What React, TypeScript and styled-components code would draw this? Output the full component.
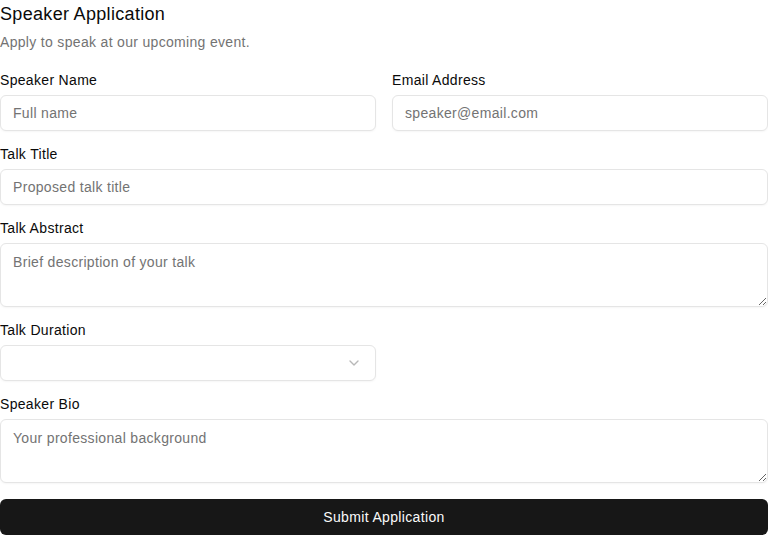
import React from 'react';
import styled, { createGlobalStyle } from 'styled-components';
import { ChevronDown } from 'lucide-react';

const GlobalStyle = createGlobalStyle`
  * { box-sizing: border-box; }
  body {
    margin: 0;
    background: #ffffff;
    font-family: 'Liberation Sans', Arial, Helvetica, sans-serif;
    letter-spacing: 0.02em;
    color: #0a0a0a;
  }
`;

const Page = styled.div`
  width: 768px;
`;

const Heading = styled.h2`
  margin: 0;
  font-size: 18px;
  font-weight: 400;
  line-height: 28px;
`;

const Lead = styled.p`
  margin: 4px 0 0;
  font-size: 14px;
  line-height: 20px;
  color: #737373;
`;

const Form = styled.form`
  display: flex;
  flex-direction: column;
  gap: 13px;
  margin-top: 18px;
`;

const Row = styled.div`
  display: grid;
  grid-template-columns: 1fr 1fr;
  gap: 16px;
`;

const Field = styled.div<{ half?: boolean }>`
  display: flex;
  flex-direction: column;
  gap: 5px;
  width: ${(p) => (p.half ? '376px' : '100%')};
`;

const Label = styled.label`
  font-size: 14px;
  line-height: 20px;
`;

const Input = styled.input`
  height: 36px;
  width: 100%;
  border: 1px solid #e5e5e5;
  border-radius: 6px;
  padding: 0 12px;
  font-family: inherit;
  letter-spacing: inherit;
  font-size: 14px;
  color: #0a0a0a;
  background: #fff;
  box-shadow: 0 1px 2px rgba(0, 0, 0, 0.04);
  outline: none;
  &::placeholder { color: #737373; }
`;

const TextArea = styled.textarea`
  height: 64px;
  width: 100%;
  border: 1px solid #e5e5e5;
  border-radius: 6px;
  padding: 8px 12px;
  font-family: inherit;
  letter-spacing: inherit;
  font-size: 14px;
  line-height: 20px;
  color: #0a0a0a;
  background: #fff;
  box-shadow: 0 1px 2px rgba(0, 0, 0, 0.04);
  outline: none;
  display: block;
  &::placeholder { color: #737373; }
`;

const SelectBox = styled.button`
  height: 36px;
  width: 100%;
  border: 1px solid #e5e5e5;
  border-radius: 6px;
  padding: 0 13px 0 12px;
  background: #fff;
  box-shadow: 0 1px 2px rgba(0, 0, 0, 0.04);
  display: flex;
  align-items: center;
  justify-content: flex-end;
  color: #737373;
  svg { opacity: 0.5; }
`;

const Submit = styled.button`
  margin-top: 3px;
  height: 36px;
  width: 100%;
  border: none;
  border-radius: 6px;
  background: #171717;
  color: #fafafa;
  font-family: inherit;
  letter-spacing: 0.025em;
  font-size: 14px;
  font-weight: 500;
`;

export default function App() {
  return (
    <Page>
      <GlobalStyle />
      <Heading>Speaker Application</Heading>
      <Lead>Apply to speak at our upcoming event.</Lead>
      <Form onSubmit={(e) => e.preventDefault()}>
        <Row>
          <Field>
            <Label>Speaker Name</Label>
            <Input placeholder="Full name" />
          </Field>
          <Field>
            <Label>Email Address</Label>
            <Input placeholder="speaker@email.com" />
          </Field>
        </Row>
        <Field>
          <Label>Talk Title</Label>
          <Input placeholder="Proposed talk title" />
        </Field>
        <Field>
          <Label>Talk Abstract</Label>
          <TextArea placeholder="Brief description of your talk" />
        </Field>
        <Field half>
          <Label>Talk Duration</Label>
          <SelectBox type="button">
            <ChevronDown size={16} strokeWidth={2} />
          </SelectBox>
        </Field>
        <Field>
          <Label>Speaker Bio</Label>
          <TextArea placeholder="Your professional background" />
        </Field>
        <Submit type="submit">Submit Application</Submit>
      </Form>
    </Page>
  );
}
